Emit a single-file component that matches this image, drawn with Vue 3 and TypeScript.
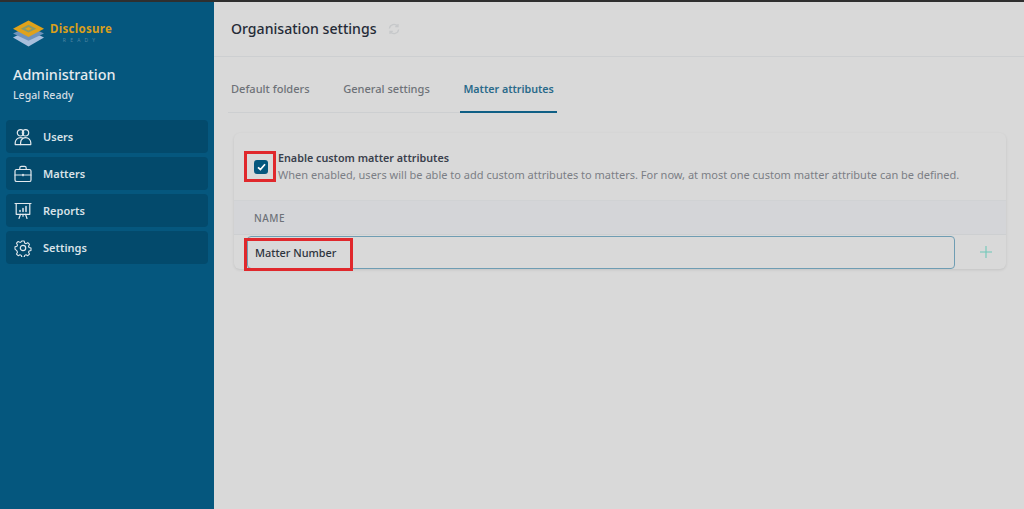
<script setup lang="ts">
const nav: { label: string; icon: string }[] = [
  { label: 'Users', icon: 'users' },
  { label: 'Matters', icon: 'matters' },
  { label: 'Reports', icon: 'reports' },
  { label: 'Settings', icon: 'settings' },
]
const tabs = ['Default folders', 'General settings', 'Matter attributes']
</script>

<template>
  <div class="page">
    <div class="strip"></div>
    <div class="body">
      <aside class="side">
        <div class="logo">
          <svg width="33" height="29" viewBox="0 0 34 29">
            <path d="M1 18.5 17 11l16 7.5L17 28z" fill="#a9bfdc" />
            <path d="M1 14.5 17 7 33 14.5 17 22z" fill="#6f93bb" />
            <path d="M1 9.5 17 1l16 8.5L17 18z" fill="#e0a21a" />
            <path d="M9 9.5 17 5.5l8 4-8 4z" fill="#8a9a6a" />
            <path d="M13.5 9.5 17 7.7l3.5 1.8L17 11.3z" fill="#e0a21a" />
          </svg>
          <div class="logo-text">
            <div class="logo-name">Disclosure</div>
            <div class="logo-sub">READY</div>
          </div>
        </div>
        <div class="admin">Administration</div>
        <div class="org">Legal Ready</div>
        <nav class="nav">
          <a v-for="n in nav" :key="n.label" class="nav-item">
            <svg class="nav-icon" width="18" height="18" viewBox="0 0 18 18" fill="none" stroke="#e3e9ee" stroke-width="1.2" stroke-linecap="round" stroke-linejoin="round">
              <template v-if="n.icon === 'users'">
                <circle cx="6.5" cy="4.8" r="3.2" />
                <circle cx="11.5" cy="4.8" r="3.2" />
                <path d="M1.2 16.6v-1.8c0-3 2.4-5.2 5.3-5.2 1.1 0 1.9.3 2.5.7.6-.4 1.4-.7 2.5-.7 2.9 0 5.3 2.2 5.3 5.2v1.8z" />
                <path d="M9 10.3c-1.6 1-2.4 2.6-2.4 4.4v1.9" />
              </template>
              <template v-else-if="n.icon === 'matters'">
                <rect x="1" y="4.5" width="16" height="12" rx="1.6" />
                <path d="M5.8 4.5V3a1.6 1.6 0 0 1 1.6-1.6h3.2A1.6 1.6 0 0 1 12.2 3v1.5" />
                <path d="M1 10h16" />
                <path d="M9 9.6v1" stroke-width="1.6" />
              </template>
              <template v-else-if="n.icon === 'reports'">
                <path d="M1 1.5h16" />
                <path d="M2.2 1.5v10.8h13.6V1.5" />
                <path d="M6.5 12.3 5 16.5M11.5 12.3l1.5 4.2M9 12.3v2" />
                <path d="M6 9.5v-1M9 9.5v-3M12 9.5v-5" stroke-width="1.5" />
              </template>
              <template v-else>
                <circle cx="9" cy="9" r="2.7" />
                <path d="M7.6 1.2h2.8l.5 2.2 1.5.7 2-1.1 1.9 2-1.1 2 .6 1.5 2.2.6v2.6l-2.2.6-.6 1.5 1.1 2-1.9 1.9-2-1.1-1.5.7-.5 2.2H7.6l-.5-2.2-1.5-.7-2 1.1-1.9-1.9 1.1-2-.6-1.5L0 10.3V7.7l2.2-.6.6-1.5-1.1-2 1.9-2 2 1.1 1.5-.7z" transform="translate(1 1) scale(.889)" />
              </template>
            </svg>
            <span>{{ n.label }}</span>
          </a>
        </nav>
      </aside>
      <main class="main">
        <header class="head">
          <h1>Organisation settings</h1>
          <svg width="12" height="12" viewBox="0 0 13 13" fill="none" stroke="#c6c8ca" stroke-width="1.4">
            <path d="M1.5 6a5 5 0 0 1 9-2.4M11.5 7a5 5 0 0 1-9 2.4" />
            <path d="M10.8 1v3h-3M2.2 12V9h3" />
          </svg>
        </header>
        <div class="tabs">
          <div v-for="(t, i) in tabs" :key="t" class="tab" :class="{ active: i === 2 }">{{ t }}</div>
        </div>
        <section class="card">
          <div class="enable">
            <span class="check">
              <svg width="9" height="8" viewBox="0 0 9 8" fill="none" stroke="#fff" stroke-width="1.7"><path d="M1 4.3 3.4 6.5 8 1.3" /></svg>
            </span>
            <div>
              <div class="en-title">Enable custom matter attributes</div>
              <div class="en-desc">When enabled, users will be able to add custom attributes to matters. For now, at most one custom matter attribute can be defined.</div>
            </div>
          </div>
          <div class="th">NAME</div>
          <div class="row">
            <div class="input">Matter Number</div>
            <svg class="plus" width="12" height="12" viewBox="0 0 12 12" stroke="#6fc8b8" stroke-width="1.1"><path d="M6 0v12M0 6h12" /></svg>
          </div>
        </section>
      </main>
    </div>
    <div class="mark mark-check"></div>
    <div class="mark mark-input"></div>
  </div>
</template>

<style>
html, body { margin: 0; background: #d9d9d9; }
</style>

<style scoped>
.page {
  position: relative;
  width: 1024px;
  height: 509px;
  overflow: hidden;
  display: flex;
  flex-direction: column;
  background: #d9d9d9;
  font-family: "Noto Sans", "Open Sans", sans-serif;
}
.strip { height: 2px; background: #2f2f2f; flex: none; }
.body { flex: 1; display: flex; min-height: 0; }
.side {
  width: 214px;
  flex: none;
  background: #05577e;
  padding: 16px 6px 0;
  box-sizing: border-box;
}
.logo { display: flex; align-items: center; gap: 5px; padding-left: 6px; height: 30px; }
.logo-name { color: #d99f1c; font-size: 11.5px; font-weight: 700; line-height: 14px; letter-spacing: .3px; }
.logo-sub { color: #4f86a3; font-size: 5px; letter-spacing: 4.2px; line-height: 7px; text-align: center; margin-top: 1px; }
.admin { color: #e6ebef; font-size: 14.4px; font-weight: 500; line-height: 20px; margin: 17px 0 0 7px; }
.org { color: #d3dde4; font-size: 10.5px; font-weight: 500; line-height: 15px; margin: 3px 0 0 7px; }
.nav { margin-top: 17px; display: flex; flex-direction: column; gap: 3.7px; }
.nav-item {
  height: 33.3px;
  background: #034a6c;
  border-radius: 4px;
  display: flex;
  align-items: center;
  gap: 11px;
  padding-left: 8px;
  color: #d9e2e8;
  font-size: 11px;
  font-weight: 600;
}
.nav-icon { flex: none; }
.main { flex: 1; min-width: 0; }
.head {
  height: 55px;
  box-sizing: border-box;
  border-bottom: 1px solid #cdcfd1;
  display: flex;
  align-items: center;
  gap: 11px;
  padding: 0 0 0 17px;
}
h1 { margin: 0; color: #252b37; font-size: 14.1px; font-weight: 500; line-height: 20px; }
.tabs {
  display: flex;
  margin: 0 0 0 14px;
  height: 56px;
  box-sizing: border-box;
  border-bottom: 1px solid #cdcfd1;
  gap: 27.6px;
  width: 329px;
}
.tab {
  padding: 0 3px;
  height: 56px;
  box-sizing: border-box;
  line-height: 64px;
  font-size: 11.05px;
  font-weight: 500;
  color: #6e7278;
  white-space: nowrap;
}
.tab.active { color: #2a6a8a; font-size: 10.7px; font-weight: 600; border-bottom: 2px solid #0f5f85; }
.card {
  margin: 20px 18px 0 20px;
  border-radius: 6px;
  box-shadow: 0 1px 3px rgba(0, 0, 0, .1);
  overflow: hidden;
}
.enable {
  height: 68px;
  box-sizing: border-box;
  display: flex;
  align-items: center;
  gap: 10px;
  padding: 0 0 0 20px;
  border-bottom: 1px solid #d0d2d4;
}
.check {
  width: 14px;
  height: 14px;
  border-radius: 3px;
  background: #05577e;
  display: flex;
  align-items: center;
  justify-content: center;
  flex: none;
}
.en-title { color: #3a404c; font-size: 10.75px; font-weight: 600; line-height: 15px; margin-bottom: 1px; }
.en-desc { color: #7b7e85; font-size: 11.03px; line-height: 16px; white-space: nowrap; }
.th {
  height: 34px;
  background: #d4d5d8;
  color: #6e7278;
  font-size: 10px;
  font-weight: 500;
  letter-spacing: .5px;
  padding-left: 20px;
  line-height: 34px;
  box-sizing: border-box;
  border-bottom: 1px solid #cdcfd1;
}
.row { display: flex; align-items: center; height: 34px; }
.input {
  width: 708px;
  margin-left: 13px;
  height: 33px;
  box-sizing: border-box;
  border: 1px solid #6f9db3;
  border-radius: 4px;
  color: #2d333d;
  font-size: 10.9px;
  font-weight: 500;
  line-height: 31px;
  padding-left: 7px;
}
.plus { margin-left: 25px; }
.mark { position: absolute; border: 3px solid #e0282c; box-sizing: border-box; }
.mark-check { left: 244px; top: 151px; width: 32px; height: 31px; }
.mark-input { left: 244px; top: 238px; width: 109px; height: 33px; }
</style>
